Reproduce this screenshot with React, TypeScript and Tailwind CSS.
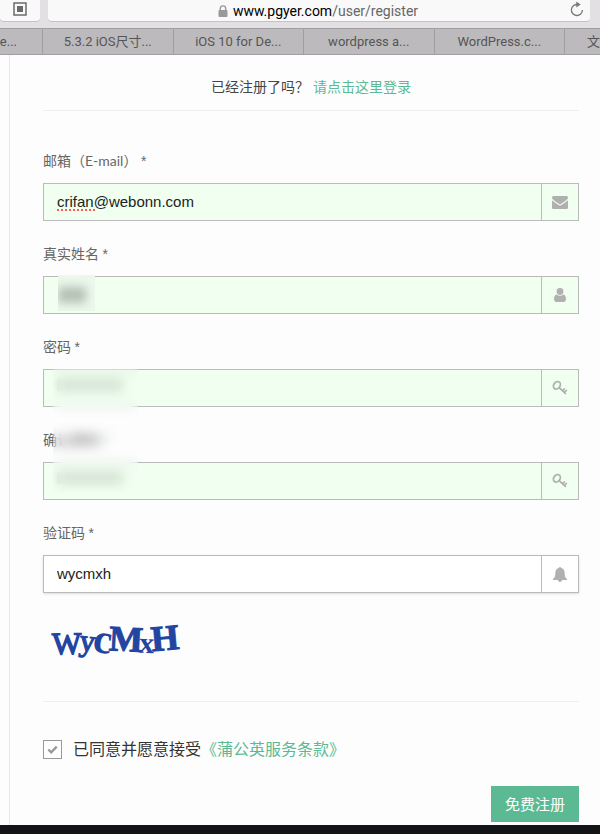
import React, { useState } from 'react';

const tabs = ['5.3.2 iOS尺寸...', 'iOS 10 for De...', 'wordpress a...', 'WordPress.c...'];

const MailIcon = () => (
  <svg width="16" height="13" viewBox="0 0 16 13" fill="currentColor" aria-hidden="true">
    <path d="M0 1.6C0 .7.7 0 1.6 0h12.8c.9 0 1.6.7 1.6 1.6 0 .9-.6 1.8-1.4 2.300L9.300 7.700c-.5.400-.9.600-1.300.600s-.8-.2-1.300-.6L1.400 3.900C.600 3.300 0 2.500 0 1.600z" />
    <path d="M0 4.200c.3.300.6.500.9.800l4.900 3.500c.7.500 1.400.9 2.200.9s1.500-.4 2.200-.9L15.100 5c.3-.3.600-.500.9-.8v7.200c0 .9-.7 1.600-1.600 1.600H1.600C.7 13 0 12.300 0 11.400z" />
  </svg>
);

const UserIcon = () => (
  <svg width="12" height="14" viewBox="0 0 12 14" fill="currentColor" aria-hidden="true">
    <circle cx="6" cy="3.500" r="3.400" />
    <path d="M2.800 6.400c.9.800 2 1.300 3.200 1.300s2.300-.5 3.200-1.300C11.300 6.600 12 9 12 11.200 12 12.800 11 14 9.500 14h-7C1 14 0 12.800 0 11.200 0 9 .7 6.600 2.800 6.400z" />
  </svg>
);

const KeyIcon = () => (
  <svg width="16" height="16" viewBox="0 0 16 16" fill="none" stroke="currentColor" strokeWidth="1.800" strokeLinecap="round" aria-hidden="true">
    <ellipse cx="4.900" cy="5.300" rx="3.100" ry="4" transform="rotate(38 4.900 5.300)" />
    <path d="M7.400 7.800l6 5.600M10.700 10.600l1.500-1.600M12.700 12.200l1.600-1.700" />
  </svg>
);

const BellIcon = () => (
  <svg width="14" height="15" viewBox="0 0 14 15" fill="currentColor" aria-hidden="true">
    <path d="M7 0c.6 0 1 .4 1 1 2.300.4 3.600 2.200 3.600 4.400 0 3.600.8 5.300 2.400 6.600v1H9c0 1.100-.9 2-2 2s-2-.9-2-2H0v-1c1.600-1.300 2.400-3 2.400-6.600C2.400 3.200 3.700 1.400 6 1c0-.6.400-1 1-1z" />
  </svg>
);

type FieldProps = {
  id: string;
  label: string;
  value: string;
  type?: string;
  plain?: boolean;
  icon: React.ReactNode;
  children?: React.ReactNode;
};

const Field = ({ id, label, value, type = 'text', plain, icon, children }: FieldProps) => (
  <div className="relative">
    <label htmlFor={id} className="block mb-3 h-5 text-sm leading-5 text-[#666]">
      {label} <span className="font-['Liberation_Sans',sans-serif]">*</span>
    </label>
    <div className={`flex h-[38px] border border-[#bbb] ${plain ? 'bg-white shadow-sm' : 'bg-[#f0fff0]'}`}>
      <input
        id={id}
        type={type}
        defaultValue={value}
        spellCheck={false}
        className={`min-w-0 flex-1 px-[13px] bg-transparent font-['Liberation_Sans',sans-serif] text-[15px] outline-none ${type === 'password' ? 'text-[#999]' : 'text-[#222]'}`}
      />
      <span className="flex w-[37px] items-center justify-center border-l border-[#bbb] text-[#b0b0b0]">{icon}</span>
    </div>
    {children}
  </div>
);

const Captcha = () => (
  <svg
    className="mt-5 block text-[#2145a0]"
    width="150"
    height="52"
    viewBox="0 0 150 52"
    fill="currentColor"
    stroke="currentColor"
    fontFamily="'Liberation Serif', serif"
    fontWeight="bold"
    role="img"
    aria-label="WyCMxH"
  >
    <text x="9" y="41" fontSize="31" fontWeight="normal" strokeWidth="1.400" transform="rotate(-1 22 30)">W</text>
    <text x="36" y="38" fontSize="31" fontWeight="normal" strokeWidth="1.200" transform="rotate(6 44 34)">y</text>
    <text x="50" y="40" fontSize="42" strokeWidth="0" transform="rotate(8 60 30)">c</text>
    <text x="66" y="38" fontSize="36" strokeWidth="1" transform="rotate(3 82 28)">M</text>
    <text x="96" y="40" fontSize="30" strokeWidth="0" transform="rotate(3 104 34)">x</text>
    <text x="108" y="37" fontSize="36" strokeWidth="1" transform="rotate(-5 122 25)">H</text>
  </svg>
);

const BrowserBar = () => (
  <header className="font-['Roboto','Noto_Sans_CJK_SC',sans-serif]">
    <div className="flex h-7 items-start gap-2 bg-[#e2e0e2] pr-[10px]">
      <button aria-label="Show all tabs" className="flex h-[22px] w-10 items-start justify-center rounded-b border-b border-[#c4c2c4] bg-[#f9f9f9] pt-[2px]">
        <svg width="14" height="14" viewBox="0 0 14 14" aria-hidden="true">
          <rect x="1" y="1" width="12" height="12" fill="none" stroke="#6b6b6b" strokeWidth="1.500" />
          <rect x="4" y="4" width="6" height="6" fill="#6b6b6b" />
        </svg>
      </button>
      <div className="flex h-[22px] flex-1 items-center rounded-b border-b border-[#c4c2c4] bg-[#f9f9f9] pr-[6px] pl-[18px]">
        <p className="flex flex-1 items-center justify-center gap-[5px] text-sm leading-5 text-[#666]">
          <svg width="10" height="12" viewBox="0 0 10 12" aria-hidden="true">
            <path d="M2.300 6V3.600a2.700 2.700 0 015.400 0V6" fill="none" stroke="#999" strokeWidth="1.400" />
            <rect x=".5" y="5" width="9" height="7" rx="1" fill="#999" />
          </svg>
          <span><span className="text-black">www.pgyer.com</span>/user/register</span>
        </p>
        <button aria-label="Reload" className="-mt-1">
          <svg width="14" height="16" viewBox="0 0 14 16" aria-hidden="true">
            <path d="M8 3.600a5.500 5.500 0 104.400 5.300" fill="none" stroke="#777" strokeWidth="1.300" />
            <path d="M6.300.5v6l4.400-3z" fill="#777" />
          </svg>
        </button>
      </div>
    </div>
    <nav className="flex h-[27px] overflow-hidden border-y border-[#a09ea0] bg-[#bcbabc] text-[13px] leading-[25px] text-[#555]">
      <a href="#" className="flex w-[42px] justify-end whitespace-nowrap pr-[25px]">e...</a>
      {tabs.map((tab) => (
        <a key={tab} href="#" className="flex-1 border-l border-[#a09ea0] text-center whitespace-nowrap">{tab}</a>
      ))}
      <a href="#" className="w-9 border-l border-[#a09ea0] pl-[22px] whitespace-nowrap">文</a>
    </nav>
  </header>
);

const App = () => {
  const [agreed, setAgreed] = useState(true);

  return (
    <div className="min-h-screen bg-[#fdfdfd] font-['Lato','Noto_Sans_CJK_SC',sans-serif]">
      <BrowserBar />

      <main className="ml-[9px] border-l border-[#e6e6e6] pr-[21px] pb-[3px] pl-[33px]">
        <p className="border-b border-[#eee] pt-[22px] pb-[13px] text-center text-sm leading-5 text-[#444]">
          已经注册了吗？<a href="#" className="ml-1 text-[#5bba94]">请点击这里登录</a>
        </p>

        <form onSubmit={(e) => e.preventDefault()}>
          <div className="mt-10 flex flex-col gap-[23px]">
            <Field id="email" label="邮箱（E-mail）" value="crifan@webonn.com" icon={<MailIcon />}>
              <span className="absolute top-[58px] left-[14px] w-[38px] border-b-2 border-dotted border-[#ff5a4d]" />
            </Field>
            <Field id="name" label="真实姓名" value="" icon={<UserIcon />}>
              <span className="absolute top-[31px] left-[15px] h-9 w-[37px] overflow-hidden bg-[#ecf8ec]">
                <span className="absolute top-3 left-0 h-4 w-7 bg-[#b4c0b4] blur-[5px]" />
              </span>
            </Field>
            <Field id="password" label="密码" value="" type="password" icon={<KeyIcon />}>
              <span className="absolute top-[42px] left-[14px] h-3 w-[66px] bg-[#d3e0d3]" />
            </Field>
            <Field id="confirm" label="确认密码" value="" type="password" icon={<KeyIcon />}>
              <span className="absolute top-[42px] left-[14px] h-3 w-[66px] bg-[#d3e0d3]" />
              {/* frosted patch over both passwords */}
              <span className="absolute -top-[61px] left-[10px] z-10 h-[124px] w-[85px] backdrop-blur-[6px]" />
            </Field>
            <Field id="captcha" label="验证码" value="wycmxh" plain icon={<BellIcon />} />
          </div>

          <Captcha />

          <div className="mt-9 flex items-center border-t border-[#eee] pt-[35px]">
            <span className="relative flex size-[19px]">
              <input
                id="agree"
                type="checkbox"
                checked={agreed}
                onChange={() => setAgreed(!agreed)}
                className="size-[19px] appearance-none border border-[#999] bg-white"
              />
              {agreed && (
                <svg className="pointer-events-none absolute top-1 left-1" width="11" height="11" viewBox="0 0 11 11" aria-hidden="true">
                  <path d="M1.300 5.500l2.900 2.800 5.500-5.600" fill="none" stroke="#999" strokeWidth="2.400" />
                </svg>
              )}
            </span>
            <label htmlFor="agree" className="ml-[11px] text-base leading-6 text-[#333]">
              已同意并愿意接受<a href="#" className="text-[#5bba94]">《蒲公英服务条款》</a>
            </label>
          </div>

          <div className="mt-[25px] flex justify-end">
            <button type="submit" className="h-9 bg-[#5bba94] px-[14px] text-[15px] text-white">免费注册</button>
          </div>
        </form>
      </main>

      <footer className="h-[9px] bg-[#131418]" />
    </div>
  );
};

export default App;
